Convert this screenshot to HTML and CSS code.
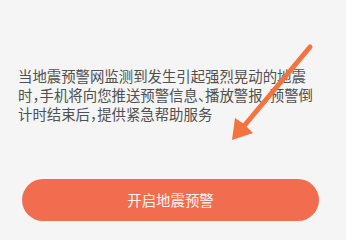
FILE: index.html
```html
<!DOCTYPE html>
<html lang="zh-CN">
<head>
<meta charset="utf-8">
<link rel="stylesheet" href="styles.css">
</head>
<body>
<main class="page">
  <p class="desc">当地震预警网监测到发生引起强烈晃动的地震时，手机将向您推送预警信息、播放警报，预警倒计时结束后，提供紧急帮助服务</p>
  <button class="cta" type="button">开启地震预警</button>
  <svg class="arrow" width="346" height="229" viewBox="0 0 346 229">
    <line x1="310" y1="47" x2="244" y2="126" stroke="#f4733f" stroke-width="5" stroke-linecap="round"/>
    <polygon points="232,140 235,118 244,124 253,133" fill="#f4733f"/>
  </svg>
</main>
</body>
</html>
```
FILE: styles.css
```css
html, body {
  margin: 0;
  padding: 0;
  background: #f5f5f5;
}
.page {
  position: relative;
  width: 346px;
  height: 229px;
  overflow: hidden;
  display: flex;
  flex-direction: column;
  font-family: "Noto Sans CJK SC", "Noto Sans", sans-serif;
}
.desc {
  margin: 0;
  padding: 66px 0 0 18px;
  width: 302px;
  font-size: 14.4px;
  line-height: 19px;
  color: #505050;
  font-feature-settings: "halt";
}
.cta {
  margin: 56px 0 0 22px;
  width: 297px;
  height: 42px;
  border: none;
  border-radius: 21px;
  background: #f26c4f;
  color: #fff6f2;
  font-family: inherit;
  font-size: 14.4px;
  padding: 0;
  line-height: 42px;
}
.arrow {
  position: absolute;
  left: 0;
  top: 0;
  pointer-events: none;
}
```
